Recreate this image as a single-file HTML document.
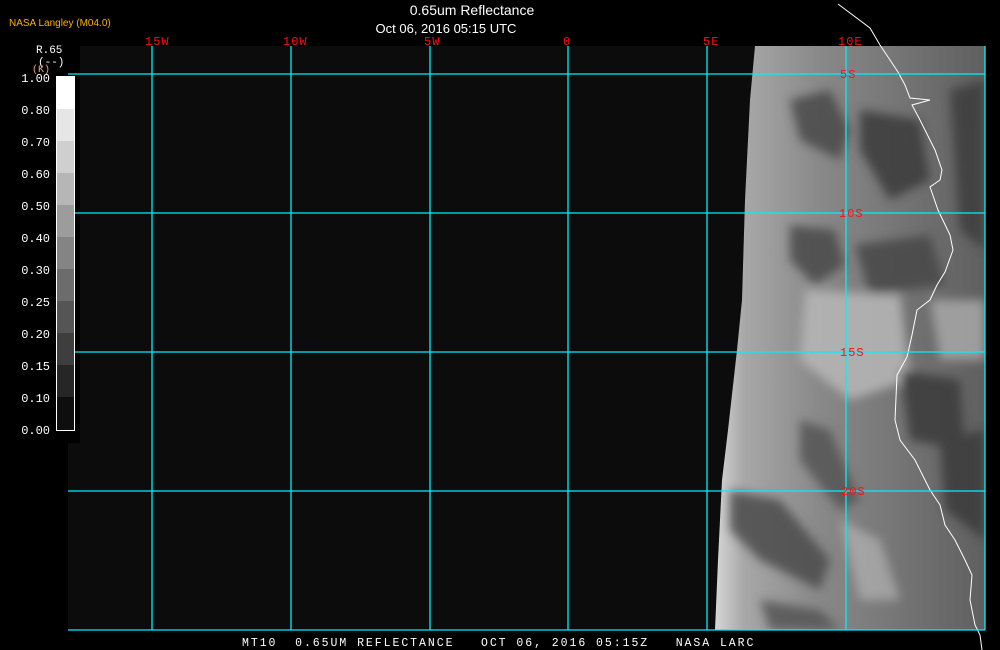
<!DOCTYPE html>
<html><head><meta charset="utf-8"><style>
html,body{margin:0;padding:0;background:#000;width:1000px;height:650px;overflow:hidden}
svg{display:block}
</style></head><body>
<svg width="1000" height="650" viewBox="0 0 1000 650" xmlns="http://www.w3.org/2000/svg">
<defs>
<linearGradient id="sat" x1="0" y1="0" x2="1" y2="0">
<stop offset="0" stop-color="#f4f4f4"/>
<stop offset="0.05" stop-color="#d8d8d8"/>
<stop offset="0.15" stop-color="#a8a8a8"/>
<stop offset="0.4" stop-color="#8a8a8a"/>
<stop offset="0.7" stop-color="#747474"/>
<stop offset="1" stop-color="#5e5e5e"/>
</linearGradient>
<filter id="blur"><feGaussianBlur stdDeviation="5"/></filter>
<clipPath id="satclip"><path d="M755,46 L750,100 L745,200 L742,300 L737,350 L728,430 L722,480 L718,560 L715,630 L985,630 L985,46 Z"/></clipPath>
</defs>
<rect x="0" y="0" width="1000" height="650" fill="#000"/>
<rect x="68" y="46" width="917" height="584" fill="#0c0c0c"/>
<rect x="0" y="46" width="80" height="397" fill="#000"/>
<g clip-path="url(#satclip)">
<rect x="700" y="46" width="290" height="584" fill="url(#sat)"/>
<g filter="url(#blur)" opacity="0.85">
<path d="M790,100 L830,90 L850,130 L840,160 L800,140 Z" fill="#4a4a4a"/>
<path d="M860,110 L920,120 L930,180 L890,200 L860,150 Z" fill="#3a3a3a"/>
<path d="M950,90 L985,80 L985,250 L960,230 Z" fill="#3c3c3c"/>
<path d="M790,225 L835,230 L845,265 L815,285 L790,260 Z" fill="#484848"/>
<path d="M855,245 L930,235 L945,285 L870,295 Z" fill="#464646"/>
<path d="M805,290 L900,295 L910,380 L850,400 L800,360 Z" fill="#b8b8b8"/>
<path d="M930,300 L985,300 L985,360 L940,360 Z" fill="#a8a8a8"/>
<path d="M900,370 L960,380 L965,450 L910,440 Z" fill="#3a3a3a"/>
<path d="M940,440 L985,430 L985,540 L945,510 Z" fill="#3a3a3a"/>
<path d="M730,490 L780,500 L830,560 L820,590 L760,560 L730,530 Z" fill="#4c4c4c"/>
<path d="M800,420 L830,430 L860,500 L840,510 L800,460 Z" fill="#555"/>
<path d="M760,600 L820,610 L840,630 L770,630 Z" fill="#555"/>
<path d="M840,520 L880,540 L900,600 L860,600 Z" fill="#c8c8c8" opacity="0.6"/>
</g>
</g>
<rect x="0" y="46" width="68" height="584" fill="#000"/>
<path d="M838,4 L870,28 L880,45 L898,72 L905,85 L910,98 L930,100 L912,105 L920,120 L935,150 L942,170 L940,180 L930,187 L938,210 L950,235 L953,250 L945,272 L937,285 L930,300 L917,310 L912,335 L907,357 L897,375 L895,420 L900,440 L915,460 L930,490 L940,505 L945,525 L955,540 L965,560 L972,575 L970,600 L975,625 L980,635 L982,650" fill="none" stroke="#fff" stroke-width="1"/>
<g stroke="#00f0ff" stroke-width="1.3">
<line x1="152" y1="46" x2="152" y2="630"/>
<line x1="291" y1="46" x2="291" y2="630"/>
<line x1="430" y1="46" x2="430" y2="630"/>
<line x1="568" y1="46" x2="568" y2="630"/>
<line x1="707" y1="46" x2="707" y2="630"/>
<line x1="846" y1="46" x2="846" y2="630"/>
<line x1="985" y1="46" x2="985" y2="630"/>
<line x1="68" y1="74" x2="985" y2="74"/>
<line x1="68" y1="213" x2="985" y2="213"/>
<line x1="68" y1="352" x2="985" y2="352"/>
<line x1="68" y1="491" x2="985" y2="491"/>
<line x1="68" y1="630" x2="985" y2="630"/>
</g>
<g>
<rect x="56" y="77" width="18" height="32" fill="#fff"/>
<rect x="56" y="109" width="18" height="32" fill="#e6e6e6"/>
<rect x="56" y="141" width="18" height="32" fill="#cfcfcf"/>
<rect x="56" y="173" width="18" height="32" fill="#b6b6b6"/>
<rect x="56" y="205" width="18" height="32" fill="#9c9c9c"/>
<rect x="56" y="237" width="18" height="32" fill="#848484"/>
<rect x="56" y="269" width="18" height="32" fill="#6c6c6c"/>
<rect x="56" y="301" width="18" height="32" fill="#555"/>
<rect x="56" y="333" width="18" height="32" fill="#3e3e3e"/>
<rect x="56" y="365" width="18" height="32" fill="#262626"/>
<rect x="56" y="397" width="18" height="33" fill="#0e0e0e"/>
<rect x="56.5" y="76.5" width="18" height="354" fill="none" stroke="#fff" stroke-width="1"/>
</g>
<g font-family="Liberation Mono, monospace" font-size="12" fill="#fff" text-anchor="end">
<text x="50" y="82">1.00</text>
<text x="50" y="114">0.80</text>
<text x="50" y="146">0.70</text>
<text x="50" y="178">0.60</text>
<text x="50" y="210">0.50</text>
<text x="50" y="242">0.40</text>
<text x="50" y="274">0.30</text>
<text x="50" y="306">0.25</text>
<text x="50" y="338">0.20</text>
<text x="50" y="370">0.15</text>
<text x="50" y="402">0.10</text>
<text x="50" y="434">0.00</text>
</g>
<text x="36" y="53" font-family="Liberation Mono, monospace" font-size="11" fill="#fff">R.65</text>
<text x="38" y="65" font-family="Liberation Mono, monospace" font-size="11" fill="#fff">(--)</text>
<text x="32" y="72" font-family="Liberation Mono, monospace" font-size="10" fill="#f0a080">(K)</text>
<text x="9" y="26" font-family="Liberation Sans, sans-serif" font-size="10" fill="#ffb000">NASA Langley (M04.0)</text>
<text x="472" y="15" font-family="Liberation Sans, sans-serif" font-size="14" fill="#fff" text-anchor="middle">0.65um Reflectance</text>
<text x="446" y="33" font-family="Liberation Sans, sans-serif" font-size="13" fill="#fff" text-anchor="middle">Oct 06, 2016 05:15 UTC</text>
<g font-family="Liberation Mono, monospace" font-size="12" fill="#ff1010" letter-spacing="1">
<text x="145" y="45">15W</text>
<text x="283" y="45">10W</text>
<text x="424" y="45">5W</text>
<text x="563" y="45">0</text>
<text x="703" y="45">5E</text>
<text x="838" y="45">10E</text>
<text x="840" y="78">5S</text>
<text x="839" y="217">10S</text>
<text x="840" y="356">15S</text>
<text x="841" y="495">20S</text>
</g>
<text x="242" y="646" font-family="Liberation Mono, monospace" font-size="11.5" fill="#fff" letter-spacing="1.95" xml:space="preserve">MT10  0.65UM REFLECTANCE   OCT 06, 2016 05:15Z   NASA LARC</text>
</svg>
</body></html>
